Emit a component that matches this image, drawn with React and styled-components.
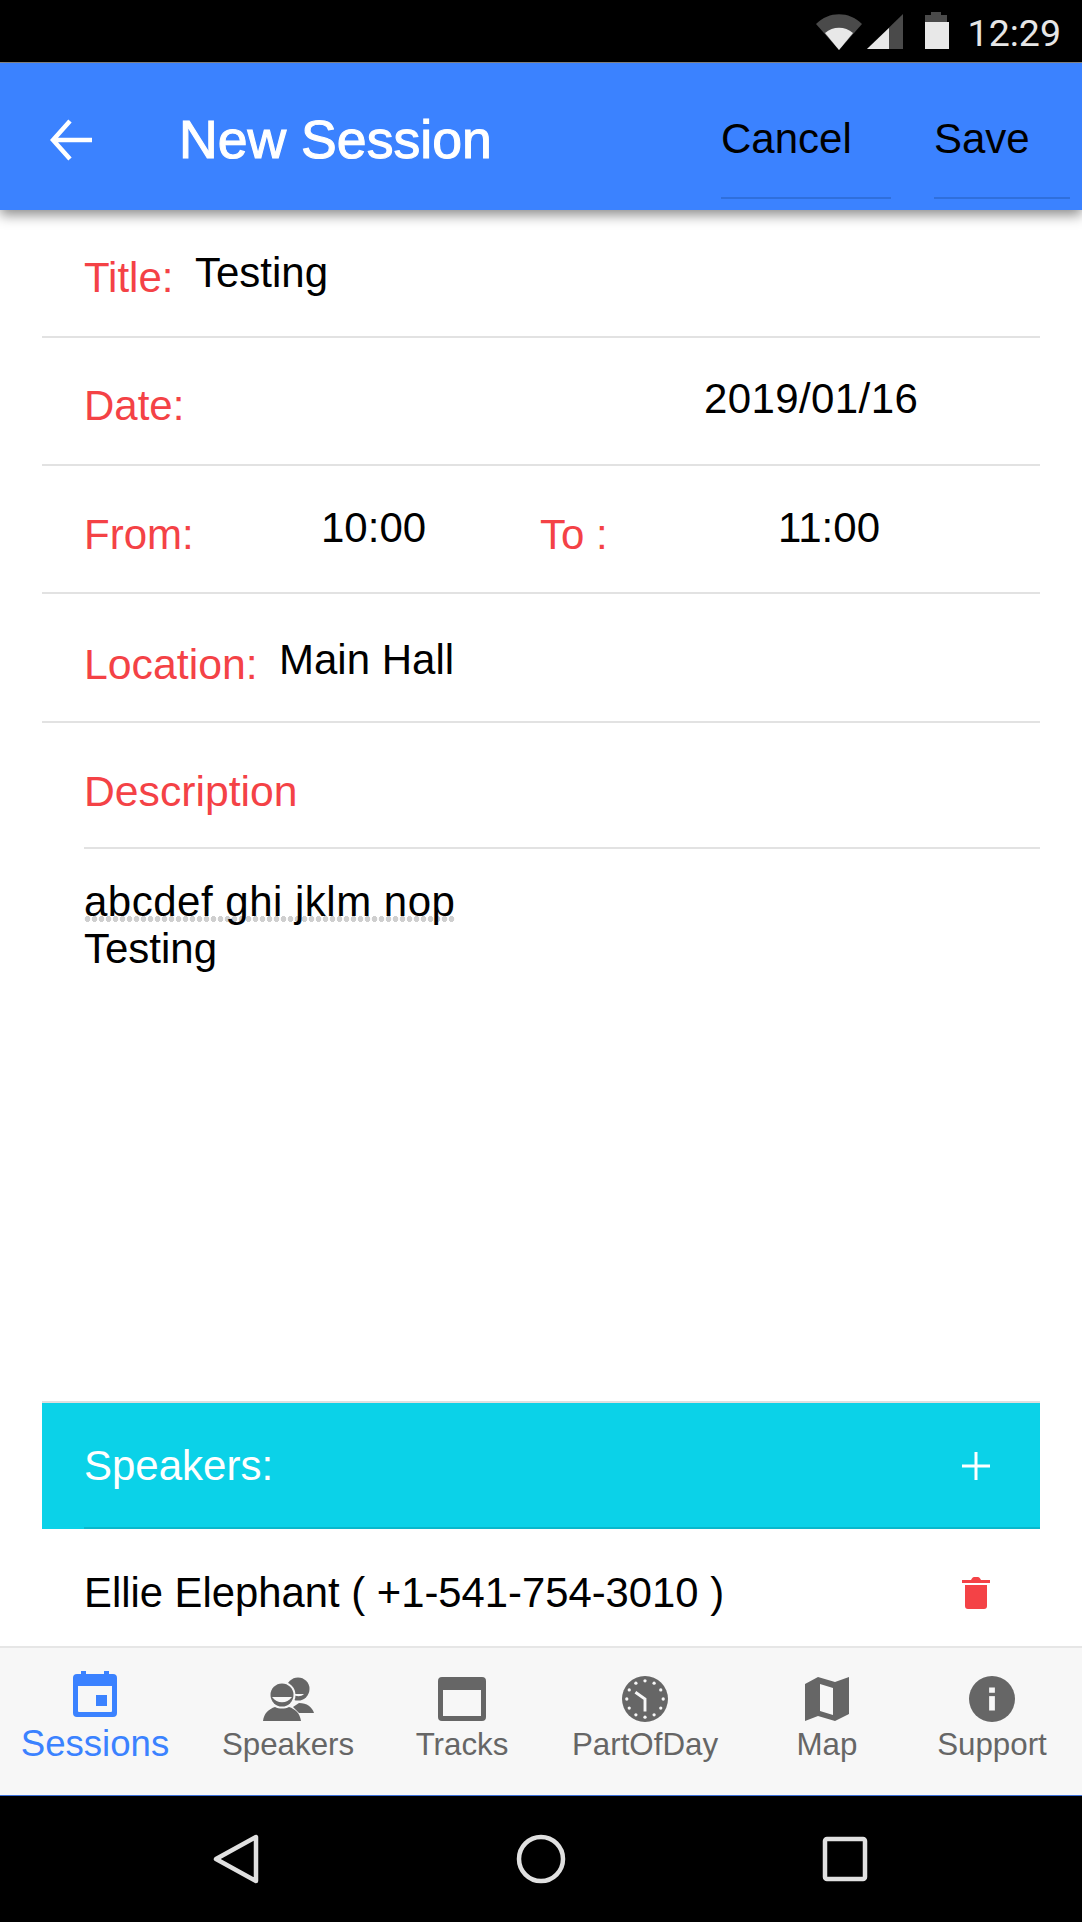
import React from "react";
import styled, { createGlobalStyle } from "styled-components";

const RED = "#f44246";
const BLUE = "#3b82ff";
const GRAY = "#666666";

const GlobalStyle = createGlobalStyle`
  html, body {
    margin: 0;
    padding: 0;
    background: #fff;
    font-family: "Liberation Sans", Arial, sans-serif;
  }
`;

const Screen = styled.div`
  width: 1082px;
  height: 1922px;
  display: flex;
  flex-direction: column;
  overflow: hidden;
`;

const StatusBar = styled.div`
  height: 63px;
  flex: none;
  box-sizing: border-box;
  background: #000;
  border-bottom: 1px solid #8a8a8a;
  display: flex;
  align-items: center;
  justify-content: flex-end;
  padding: 0 21px 0 0;
  color: #e6e6e6;
  font-family: Roboto, sans-serif;
  font-size: 37.5px;
`;

const StatusIcons = styled.svg`
  width: 133px;
  height: 40px;
  margin-right: 19px;
`;

const StatusTime = styled.span`
  padding-top: 4px;
`;

const Header = styled.header`
  height: 147px;
  flex: none;
  background: ${BLUE};
  display: flex;
  position: relative;
  z-index: 2;
  box-shadow: 0 5px 12px rgba(0, 0, 0, 0.45);
`;

const BackButton = styled.svg`
  width: 44px;
  height: 44px;
  margin: 55px 85px 0 50px;
`;

const HeaderTitle = styled.div`
  color: #fff;
  font-size: 53.6px;
  font-weight: 400;
  -webkit-text-stroke: 1.1px #fff;
  line-height: 56px;
  padding-top: 48px;
  width: 542px;
  white-space: nowrap;
`;

const HeaderButton = styled.div`
  width: ${(p) => p.$width}px;
  margin-left: ${(p) => p.$gap}px;
  height: 136px;
  box-sizing: border-box;
  padding-top: 52px;
  font-size: 42px;
  line-height: 48px;
  color: #000;
  border-bottom: 2px solid #2f6fdc;
`;

const Content = styled.main`
  flex: 1;
  display: flex;
  flex-direction: column;
  padding: 0 42px;
  background: #fff;
`;

const Row = styled.div`
  height: ${(p) => p.$height || 128}px;
  flex: none;
  box-sizing: border-box;
  border-bottom: 2px solid #e2e2e2;
  display: flex;
  padding-left: 42px;
`;

const Label = styled.div`
  width: ${(p) => p.$width}px;
  flex: none;
  color: ${RED};
  font-size: ${(p) => p.$size || 42}px;
  line-height: 46px;
  padding-top: ${(p) => p.$top}px;
  white-space: nowrap;
`;

const Value = styled.div`
  width: ${(p) => p.$width || "auto"};
  flex: none;
  color: #000;
  font-size: 42px;
  letter-spacing: ${(p) => p.$spacing || 0}px;
  line-height: 46px;
  padding-top: ${(p) => p.$top}px;
  white-space: nowrap;
`;

const DescriptionHead = styled.div`
  height: 126px;
  flex: none;
  box-sizing: border-box;
  margin-left: 42px;
  padding-top: 44px;
  border-bottom: 2px solid #e2e2e2;
  color: ${RED};
  font-size: 42.7px;
  line-height: 48px;
`;

const DescriptionBody = styled.div`
  height: 552px;
  flex: none;
  box-sizing: border-box;
  padding: 29px 0 0 42px;
  color: #000;
  font-size: 42px;
  line-height: 47px;
`;

const Misspelled = styled.span`
  letter-spacing: 0.5px;
  background-image: radial-gradient(circle at 3.5px 3px, #cfcfcf 2.7px, transparent 3.1px);
  background-size: 7px 6px;
  background-repeat: repeat-x;
  background-position: 0 38px;
`;

const SpeakersBar = styled.div`
  height: 128px;
  flex: none;
  box-sizing: border-box;
  background:
    linear-gradient(#08b8cc, #08b8cc) no-repeat 42px 100% / calc(100% - 42px) 2px,
    #0bd2e8;
  border-top: 2px solid #dfdfdf;
  display: flex;
  align-items: center;
  justify-content: space-between;
  padding: 0 50px 0 42px;
  color: #fff;
  font-size: 42px;
`;

const SpeakerRow = styled.div`
  height: 116px;
  flex: none;
  display: flex;
  align-items: center;
  justify-content: space-between;
  padding: 11px 50px 0 42px;
  box-sizing: border-box;
  color: #000;
  font-size: 41.8px;
`;

const TabBar = styled.nav`
  height: 150px;
  flex: none;
  box-sizing: border-box;
  background: #f7f7f7;
  border-top: 2px solid #e6e6e6;
  border-bottom: 1px solid #3b6fd8;
  display: grid;
  grid-template-columns: 190px 196px 152px 214px 150px 180px;
`;

const Tab = styled.div`
  display: flex;
  flex-direction: column;
  align-items: center;
  padding-top: ${(p) => (p.$active ? 23 : 28)}px;
  color: ${(p) => (p.$active ? BLUE : GRAY)};
  font-size: ${(p) => (p.$active ? 36.6 : 31.3)}px;
  line-height: ${(p) => (p.$active ? 40 : 36)}px;
  white-space: nowrap;
`;

const TabIcon = styled.svg`
  width: ${(p) => p.$width || 48}px;
  height: 46px;
  flex: none;
  margin-bottom: ${(p) => (p.$active ? 7 : 5)}px;
`;

const NavBar = styled.div`
  flex: none;
  height: 126px;
  background: #000;
  display: flex;
  align-items: center;
  padding: 0 0 0 212px;
  box-sizing: border-box;
  gap: 254px;
`;

const NavIcon = styled.svg`
  width: 50px;
  height: 50px;
  flex: none;
  fill: none;
  stroke: #e0e0e0;
  stroke-width: 4.5;
  stroke-linejoin: round;
`;

const CalendarIcon = () => (
  <TabIcon $active viewBox="0 0 48 46">
    <path
      fill={BLUE}
      fillRule="evenodd"
      d="M10 0h5v3h18V0h5v3h4a4 4 0 0 1 4 4v35a4 4 0 0 1-4 4H6a4 4 0 0 1-4-4V7a4 4 0 0 1 4-4h4zM7 15v25a1 1 0 0 0 1 1h32a1 1 0 0 0 1-1V15z"
    />
    <rect x="25" y="24" width="11" height="11" fill={BLUE} />
  </TabIcon>
);

const SpeakersIcon = () => (
  <TabIcon $width={52} viewBox="-1 0 52 46">
    <circle cx="35" cy="13" r="11.5" fill={GRAY} />
    <path d="M30 18c3 3 8 3 11 0z" fill="#f7f7f7" />
    <path d="M36 27c8 0 13 4 15 10H36l-6-6z" fill={GRAY} />
    <circle cx="19" cy="19" r="13.5" fill="#f7f7f7" />
    <circle cx="19" cy="19" r="11.5" fill={GRAY} />
    <path d="M9 21c5 7 15 7 20 0z" fill="#f7f7f7" />
    <path d="M0 45c1-8 6-12 12-14 4 2 10 2 14 0 6 2 11 6 12 14z" fill={GRAY} />
  </TabIcon>
);

const TracksIcon = () => (
  <TabIcon viewBox="0 0 48 46">
    <path
      fill={GRAY}
      fillRule="evenodd"
      d="M4 1h40a4 4 0 0 1 4 4v36a4 4 0 0 1-4 4H4a4 4 0 0 1-4-4V5a4 4 0 0 1 4-4zM5 14v26h38V14z"
    />
  </TabIcon>
);

const clockDots = Array.from({ length: 12 }, (_, i) => {
  const a = (i * Math.PI) / 6;
  return { x: 24 + 19 * Math.sin(a), y: 24 - 19 * Math.cos(a) };
});

const ClockIcon = () => (
  <TabIcon viewBox="0 0 48 48">
    <circle cx="24" cy="24" r="24" fill={GRAY} />
    {clockDots.map((d) => (
      <circle key={`${d.x}-${d.y}`} cx={d.x} cy={d.y} r="1.7" fill="#f7f7f7" />
    ))}
    <path d="M14 17l10 7v13" fill="none" stroke="#f7f7f7" strokeWidth="3" />
  </TabIcon>
);

const MapIcon = () => (
  <TabIcon viewBox="0 0 48 46">
    <path
      fill={GRAY}
      fillRule="evenodd"
      d="M2 8l13-7 17 5L46 1v37l-14 7-17-5-13 5zM17 8v27l13 4V12z"
    />
  </TabIcon>
);

const InfoIcon = () => (
  <TabIcon viewBox="0 0 48 48">
    <circle cx="24" cy="24" r="24" fill={GRAY} />
    <rect x="21" y="12" width="6" height="5.5" fill="#f7f7f7" />
    <rect x="21" y="21" width="6" height="15" fill="#f7f7f7" />
  </TabIcon>
);

const tabs = [
  { name: "Sessions", icon: CalendarIcon, active: true },
  { name: "Speakers", icon: SpeakersIcon },
  { name: "Tracks", icon: TracksIcon },
  { name: "PartOfDay", icon: ClockIcon },
  { name: "Map", icon: MapIcon },
  { name: "Support", icon: InfoIcon },
];

const App = () => {
  return (
    <Screen>
      <GlobalStyle />
      <StatusBar>
        <StatusIcons viewBox="0 0 133 40">
          <path d="M0 13C13 0 33 0 46 13L23 39z" fill="#4a4a4a" />
          <path d="M9 22c8-7 20-7 28 0L23 39z" fill="#e8e8e8" />
          <path d="M51 38L87 3v35z" fill="#4a4a4a" />
          <path d="M51 38l22-21v21z" fill="#e8e8e8" />
          <path d="M114 1h4v3h6v7h-22V4h6V1h6z" fill="#4a4a4a" transform="translate(7 0)" />
          <rect x="109" y="11" width="24" height="27" fill="#e8e8e8" />
        </StatusIcons>
        <StatusTime>12:29</StatusTime>
      </StatusBar>
      <Header>
        <BackButton viewBox="0 0 44 44">
          <path d="M42 22H4M20 3L3 22l17 19" fill="none" stroke="#fff" strokeWidth="4.5" />
        </BackButton>
        <HeaderTitle>New Session</HeaderTitle>
        <HeaderButton $width={170} $gap={0}>Cancel</HeaderButton>
        <HeaderButton $width={136} $gap={43}>Save</HeaderButton>
      </Header>
      <Content>
        <Row>
          <Label $width={111} $top={45}>Title:</Label>
          <Value $top={40}>Testing</Value>
        </Row>
        <Row>
          <Label $width={620} $top={45}>Date:</Label>
          <Value $top={38} $spacing={0.4}>2019/01/16</Value>
        </Row>
        <Row>
          <Label $width={237} $top={46}>From:</Label>
          <Value $top={39} $width="219px">10:00</Value>
          <Label $width={238} $top={46}>To :</Label>
          <Value $top={39}>11:00</Value>
        </Row>
        <Row $height={129}>
          <Label $width={195} $top={47} $size={42.8}>Location:</Label>
          <Value $top={43}>Main Hall</Value>
        </Row>
        <DescriptionHead>Description</DescriptionHead>
        <DescriptionBody>
          <Misspelled>abcdef ghi jklm nop</Misspelled>
          <br />
          Testing
        </DescriptionBody>
        <SpeakersBar>
          Speakers:
          <svg width="28" height="28" viewBox="0 0 28 28">
            <path d="M14 0v28M0 14h28" stroke="#fff" strokeWidth="3" />
          </svg>
        </SpeakersBar>
        <SpeakerRow>
          Ellie Elephant ( +1-541-754-3010 )
          <svg width="28" height="34" viewBox="0 0 28 34">
            <path
              fill={RED}
              d="M0 4h9c1-2 2-3 3-3h4c1 0 2 1 3 3h9v3H0zM3 9h22v21a3 3 0 0 1-3 3H6a3 3 0 0 1-3-3z"
            />
          </svg>
        </SpeakerRow>
      </Content>
      <TabBar>
        {tabs.map((tab) => (
          <Tab key={tab.name} $active={tab.active}>
            <tab.icon />
            {tab.name}
          </Tab>
        ))}
      </TabBar>
      <NavBar>
        <NavIcon viewBox="0 0 50 50">
          <path d="M44 3v44L4 25z" />
        </NavIcon>
        <NavIcon viewBox="0 0 50 50">
          <circle cx="25" cy="25" r="22" />
        </NavIcon>
        <NavIcon viewBox="0 0 50 50">
          <rect x="5" y="5" width="40" height="40" rx="2" />
        </NavIcon>
      </NavBar>
    </Screen>
  );
};

export default App;
